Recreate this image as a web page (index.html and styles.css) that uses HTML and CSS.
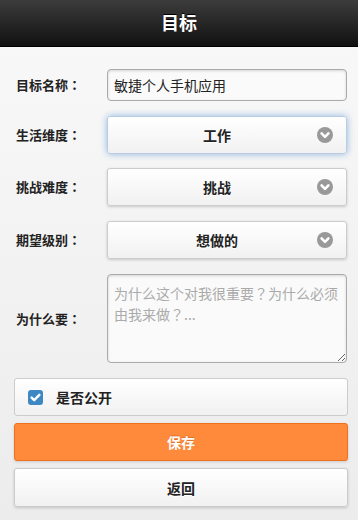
FILE: index.html
```html
<!DOCTYPE html>
<html lang="zh-CN">
<head>
<meta charset="utf-8">
<title>目标</title>
<link rel="stylesheet" href="styles.css">
</head>
<body>
<div class="page">
  <header class="header"><h1 class="title">目标</h1></header>
  <main class="content">
    <div class="row">
      <label class="label" for="name">目标名称<span class="punct" lang="zh-TW">：</span></label>
      <input class="text-input" id="name" type="text" value="敏捷个人手机应用">
    </div>
    <div class="row row-tight">
      <span class="label">生活维度<span class="punct" lang="zh-TW">：</span></span>
      <div class="select select-focus">
        <span class="select-text">工作</span>
        <svg class="select-icon" width="16" height="16" viewBox="0 0 16 16"><circle cx="8" cy="8" r="8" fill="#999"/><path d="M4.6 6.4 L8 9.8 L11.4 6.4" fill="none" stroke="#fff" stroke-width="2.6" stroke-linecap="round" stroke-linejoin="round"/></svg>
      </div>
    </div>
    <div class="row">
      <span class="label">挑战难度<span class="punct" lang="zh-TW">：</span></span>
      <div class="select">
        <span class="select-text">挑战</span>
        <svg class="select-icon" width="16" height="16" viewBox="0 0 16 16"><circle cx="8" cy="8" r="8" fill="#999"/><path d="M4.6 6.4 L8 9.8 L11.4 6.4" fill="none" stroke="#fff" stroke-width="2.6" stroke-linecap="round" stroke-linejoin="round"/></svg>
      </div>
    </div>
    <div class="row">
      <span class="label">期望级别<span class="punct" lang="zh-TW">：</span></span>
      <div class="select">
        <span class="select-text">想做的</span>
        <svg class="select-icon" width="16" height="16" viewBox="0 0 16 16"><circle cx="8" cy="8" r="8" fill="#999"/><path d="M4.6 6.4 L8 9.8 L11.4 6.4" fill="none" stroke="#fff" stroke-width="2.6" stroke-linecap="round" stroke-linejoin="round"/></svg>
      </div>
    </div>
    <div class="row">
      <label class="label" for="why">为什么要<span class="punct" lang="zh-TW">：</span></label>
      <textarea class="textarea" id="why" lang="zh-TW" placeholder="为什么这个对我很重要？为什么必须由我来做？..."></textarea>
    </div>
    <div class="check-row">
      <span class="check-box">
        <svg width="15" height="15" viewBox="0 0 15 15"><path d="M3.6 7.6 L6.2 10.2 L11.4 4.8" fill="none" stroke="#fff" stroke-width="2.4" stroke-linecap="round" stroke-linejoin="round"/></svg>
      </span>
      <span class="check-text">是否公开</span>
    </div>
    <div class="btn btn-save">保存</div>
    <div class="btn btn-back">返回</div>
  </main>
</div>
</body>
</html>
```
FILE: styles.css
```css
html, body {
  margin: 0;
  padding: 0;
}
body {
  font-family: "Noto Sans CJK SC", "Liberation Sans", sans-serif;
  color: #333;
  background: linear-gradient(#f9f9f9, #ececec);
  min-height: 520px;
}
.header {
  height: 46px;
  border-bottom: 1px solid #000;
  background: linear-gradient(#3c3c3c, #111);
  display: flex;
  align-items: center;
  justify-content: center;
}
.title {
  margin: 0 0 3px;
  font-size: 18px;
  line-height: 24px;
  font-weight: bold;
  color: #fff;
  text-shadow: 0 -1px 0 #000;
}
.content {
  padding: 22px 10px 14px 14px;
  display: flex;
  flex-direction: column;
}
.row {
  display: grid;
  grid-template-columns: 93px 240px;
  align-items: center;
  margin-bottom: 15px;
}
.row-tight {
  margin-bottom: 14px;
}
.label {
  padding-left: 2px;
  font-size: 13px;
  line-height: 18px;
  font-weight: bold;
  color: #222;
}
.punct {
  font-family: "Noto Sans CJK TC", "Noto Sans CJK SC", sans-serif;
}
.text-input {
  box-sizing: border-box;
  height: 32px;
  width: 240px;
  margin: 0;
  padding: 0 6px;
  border: 1px solid #aaa;
  border-radius: 4px;
  background: #fafafa;
  box-shadow: inset 0 1px 3px rgba(0,0,0,.15);
  font-family: inherit;
  font-size: 14px;
  color: #222;
}
.select {
  box-sizing: border-box;
  height: 38px;
  border: 1px solid #ccc;
  border-radius: 3px;
  background: linear-gradient(#fff, #f1f1f1);
  box-shadow: 0 1px 3px rgba(0,0,0,.18);
  display: flex;
  align-items: center;
  padding: 0 13px 0 15px;
}
.select-focus {
  border-color: #b8cde3;
  box-shadow: 0 0 7px #8fb6de;
}
.select-text {
  flex: 1;
  text-align: center;
  padding-right: 6px;
  font-size: 14px;
  line-height: 20px;
  font-weight: bold;
  color: #222;
  text-shadow: 0 1px 0 #fff;
}
.select-icon {
  flex: none;
  display: block;
}
.textarea {
  box-sizing: border-box;
  width: 240px;
  height: 89px;
  margin: 0;
  padding: 8px 6px;
  border: 1px solid #aaa;
  border-radius: 4px;
  background: #fafafa;
  box-shadow: inset 0 1px 3px rgba(0,0,0,.15);
  font-family: "Noto Sans CJK TC", "Noto Sans CJK SC", sans-serif;
  font-size: 14px;
  line-height: 21px;
  color: #222;
  resize: vertical;
}
.textarea::placeholder {
  color: #aaa;
}
.check-row {
  box-sizing: border-box;
  height: 38px;
  border: 1px solid #ccc;
  border-radius: 3px;
  background: linear-gradient(#fff, #f1f1f1);
  display: flex;
  align-items: center;
  padding-left: 13px;
  margin-bottom: 7px;
}
.check-box {
  width: 15px;
  height: 15px;
  border-radius: 3px;
  background: #3d88c3;
  display: flex;
}
.check-text {
  margin-left: 13px;
  font-size: 14px;
  line-height: 20px;
  font-weight: bold;
  color: #222;
}
.btn {
  box-sizing: border-box;
  height: 38px;
  border-radius: 3px;
  display: flex;
  align-items: center;
  justify-content: center;
  font-size: 14px;
  line-height: 20px;
  font-weight: bold;
}
.btn-save {
  background: #ff8a3c;
  border: 1px solid #f0721f;
  color: #fff;
  text-shadow: 0 -1px 0 rgba(180,80,10,.4);
  box-shadow: 0 1px 3px rgba(0,0,0,.15);
  margin-bottom: 7px;
}
.btn-back {
  height: 39px;
  background: linear-gradient(#fff, #f1f1f1);
  border: 1px solid #ccc;
  color: #222;
  text-shadow: 0 1px 0 #fff;
  box-shadow: 0 1px 3px rgba(0,0,0,.18);
}
```
